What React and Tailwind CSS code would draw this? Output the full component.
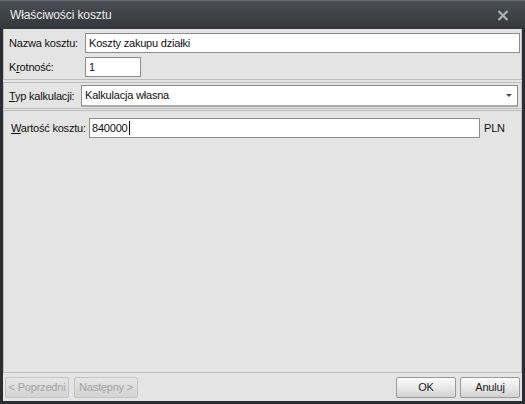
import React from 'react';

const font = { fontFamily: '"Liberation Sans", Arial, sans-serif' };

function Btn({ children, disabled, className = '' }) {
   return (
      <button
         className={`h-[21px] rounded-[2px] border text-[11px] leading-none ${
            disabled
               ? 'border-[#c4c4c4] bg-gradient-to-b from-[#e6e6e6] via-[#dcdcdc] to-[#d4d4d4] text-[#a2a2a2]'
               : 'border-[#9a9a9a] bg-gradient-to-b from-[#fbfbfb] via-[#e9e9e9] to-[#d2d2d2] text-[#1e1e1e]'
         } ${className}`}
      >
         {children}
      </button>
   );
}

export default function App() {
   return (
      <div className="w-[525px] h-[404px] bg-[#2b2d31] flex flex-col text-[11px] tracking-[-0.2px] text-[#111]" style={font}>
         {/* Title bar */}
         <div className="h-[29px] shrink-0 border-t border-[#6a6d73] bg-gradient-to-b from-[#4b4e54] to-[#33363a] flex items-center justify-between pl-[10px] pr-[16px]">
            <span className="text-[12px] text-[#ececec] tracking-[-0.1px]">Właściwości kosztu</span>
            <svg width="12" height="11" viewBox="0 0 12 11">
               <path d="M1.5 1 L10.5 10 M10.5 1 L1.5 10" stroke="#a9b1ba" strokeWidth="2.2" />
            </svg>
         </div>

         {/* Body */}
         <div className="flex-1 ml-[3px] mr-[3px] mb-[3px] bg-[#e4e4e4] flex flex-col">
            {/* Group 1 */}
            <div className="border-x border-b border-[#bcbcbc] pt-[4px] pb-[2px] flex flex-col gap-[4px]">
               <div className="flex items-center">
                  <span className="w-[81px] pl-[5px]">Nazwa kosztu:</span>
                  <div className="flex-1 h-[20px] mr-[1px] bg-white border border-[#8c8c8c] flex items-center px-[3px]">
                     Koszty zakupu działki
                  </div>
               </div>
               <div className="flex items-center">
                  <span className="w-[81px] pl-[5px]">
                     K<span className="underline">r</span>otność:
                  </span>
                  <div className="w-[56px] h-[20px] bg-white border border-[#8c8c8c] flex items-center px-[3px]">1</div>
               </div>
            </div>

            {/* Group 2 */}
            <div className="mt-[2px] border border-[#bcbcbc] pt-[2px] pb-[1px] flex items-center">
               <span className="w-[77px] pl-[5px]">
                  <span className="underline">T</span>yp kalkulacji:
               </span>
               <div className="flex-1 mr-[3px] h-[22px] bg-white border border-[#8a8a8a] border-b-2 border-b-[#a8a8a8] flex items-center justify-between pl-[3px] pr-[5px]">
                  <span>Kalkulacja własna</span>
                  <svg width="6" height="3" viewBox="0 0 6 3">
                     <path d="M0 0 H6 L3 3 Z" fill="#4a4a4a" />
                  </svg>
               </div>
            </div>

            {/* Group 3 */}
            <div className="mt-[1px] flex-1 border border-[#bcbcbc] pt-[7px] flex flex-col">
               <div className="flex items-center">
                  <span className="w-[85px] pl-[7px]">
                     <span className="underline">W</span>artość kosztu:
                  </span>
                  <div className="w-[391px] h-[20px] bg-white border border-[#8c8c8c] flex items-center px-[2px]">
                     840000<span className="inline-block w-[1px] h-[14px] bg-black ml-[1px]" />
                  </div>
                  <span className="ml-[4px]">PLN</span>
               </div>
            </div>

            {/* Buttons */}
            <div className="h-[28px] shrink-0 flex items-center pl-[2px] pr-[2px] pt-[1px]">
               <Btn disabled className="w-[64px]">&lt; Poprzedni</Btn>
               <Btn disabled className="w-[64px] ml-[5px]">Następny &gt;</Btn>
               <div className="flex-1" />
               <Btn className="w-[60px]">OK</Btn>
               <Btn className="w-[60px] ml-[4px]">Anuluj</Btn>
            </div>
         </div>
      </div>
   );
}
